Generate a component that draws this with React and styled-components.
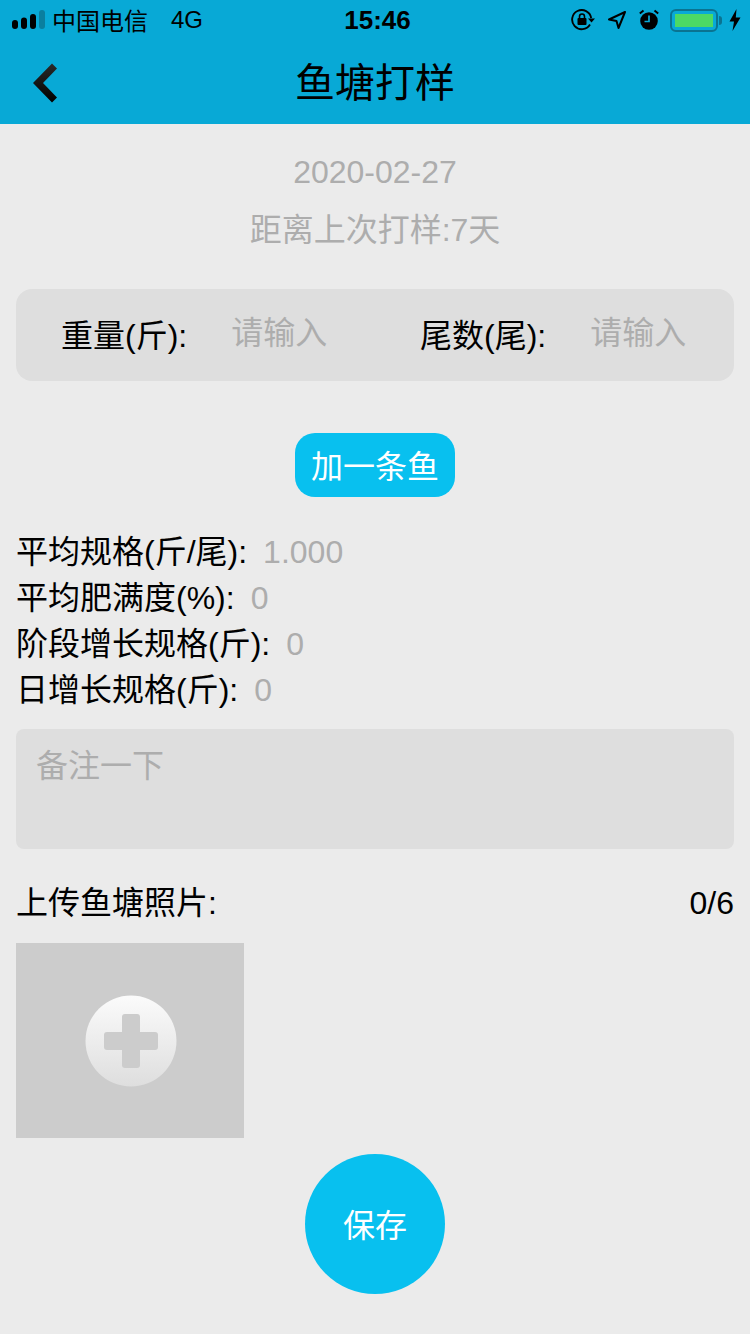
import styled, { createGlobalStyle } from 'styled-components';

const Global = createGlobalStyle`
  html, body {
    margin: 0;
    padding: 0;
    background: #ebebeb;
  }
  * { box-sizing: border-box; }
`

const FONT = `"Liberation Sans", "Noto Sans CJK SC", sans-serif`

const stats = [
  { label: '平均规格(斤/尾):', value: '1.000' },
  { label: '平均肥满度(%):', value: '0' },
  { label: '阶段增长规格(斤):', value: '0' },
  { label: '日增长规格(斤):', value: '0' },
]

function SignalBars() {
  return (
    <svg width="34" height="20" viewBox="0 0 34 20">
      <rect x="0" y="10" width="6" height="9" rx="3" fill="#000" />
      <rect x="9" y="7.5" width="6" height="11.5" rx="3" fill="#000" />
      <rect x="18" y="4" width="6" height="15" rx="3" fill="#000" />
      <rect x="27" y="0" width="6" height="19" rx="3" fill="#0a7f9f" />
    </svg>
  )
}

function LockIcon() {
  return (
    <svg width="24" height="22" viewBox="0 0 24 22" fill="none">
      <path d="M19 15.5A9.6 9.6 0 1 1 20.2 9" stroke="#000" strokeWidth="1.9" />
      <path d="M17 9.5h7l-3.5 4z" fill="#000" />
      <rect x="6.5" y="9" width="9" height="7" rx="1" fill="#000" />
      <path d="M8.5 9.5V7.5a2.5 2.5 0 0 1 5 0v2" stroke="#000" strokeWidth="1.6" />
    </svg>
  )
}

function LocationIcon() {
  return (
    <svg width="20" height="20" viewBox="0 0 20 20" fill="none">
      <path d="M18 2L2 9.5l7.5 1.5L11.5 18z" stroke="#000" strokeWidth="2" strokeLinejoin="round" />
    </svg>
  )
}

function AlarmIcon() {
  return (
    <svg width="20" height="22" viewBox="0 0 20 22" fill="none">
      <circle cx="10" cy="12" r="8.8" fill="#000" />
      <path d="M10 6.5V12.5H5.5" stroke="#08a9d6" strokeWidth="1.7" />
      <path d="M0.8 4.5L4.5 1.5M19.2 4.5L15.5 1.5" stroke="#000" strokeWidth="2" />
    </svg>
  )
}

function Bolt() {
  return (
    <svg width="12" height="22" viewBox="0 0 12 22">
      <path d="M7.5 0L0.5 12.5H5L3.5 22L11.5 8.5H6.8z" fill="#000" />
    </svg>
  )
}

function BackIcon() {
  return (
    <svg width="26" height="42" viewBox="0 0 26 42" fill="none">
      <defs>
        <linearGradient id="back" x1="0" y1="0" x2="0" y2="1">
          <stop offset="0" stopColor="#2a2a2a" />
          <stop offset="1" stopColor="#000" />
        </linearGradient>
      </defs>
      <path d="M2 21L21 1.5L26 6.5L12 21L26 35.5L21 40.5z" fill="url(#back)" />
    </svg>
  )
}

function PlusBadge() {
  return (
    <svg width="92" height="92" viewBox="0 0 92 92">
      <defs>
        <linearGradient id="badge" x1="0" y1="0" x2="0" y2="1">
          <stop offset="0" stopColor="#fbfbfb" />
          <stop offset="1" stopColor="#dedede" />
        </linearGradient>
      </defs>
      <circle cx="46" cy="46" r="45.5" fill="url(#badge)" />
      <path
        d="M40 19h12a3 3 0 0 1 3 3v15h15a3 3 0 0 1 3 3v12a3 3 0 0 1-3 3H55v15a3 3 0 0 1-3 3H40a3 3 0 0 1-3-3V55H22a3 3 0 0 1-3-3V40a3 3 0 0 1 3-3h15V22a3 3 0 0 1 3-3z"
        fill="#cccccc"
      />
    </svg>
  )
}

export default function App() {
  return (
    <Page>
      <Global />
      <Header>
        <StatusBar>
          <StatusSide>
            <SignalBars />
            <Carrier>中国电信</Carrier>
            <Network>4G</Network>
          </StatusSide>
          <Clock>15:46</Clock>
          <StatusRight>
            <LockIcon />
            <LocationIcon />
            <AlarmIcon />
            <Battery><BatteryFill /></Battery>
            <Bolt />
          </StatusRight>
        </StatusBar>
        <NavBar>
          <BackButton><BackIcon /></BackButton>
          <Title>鱼塘打样</Title>
        </NavBar>
      </Header>

      <Content>
        <DateBlock>
          <DateLine>2020-02-27</DateLine>
          <DateLine>距离上次打样:7天</DateLine>
        </DateBlock>

        <InputCard>
          <Field>
            <FieldLabel>重量(斤):</FieldLabel>
            <Placeholder>请输入</Placeholder>
          </Field>
          <Field>
            <FieldLabel>尾数(尾):</FieldLabel>
            <Placeholder>请输入</Placeholder>
          </Field>
        </InputCard>

        <AddRow>
          <AddButton>加一条鱼</AddButton>
        </AddRow>

        <Stats>
          {stats.map((s) => (
            <StatRow key={s.label}>
              <span>{s.label}</span>
              <StatValue>{s.value}</StatValue>
            </StatRow>
          ))}
        </Stats>

        <Note>备注一下</Note>

        <UploadHead>
          <span>上传鱼塘照片:</span>
          <span>0/6</span>
        </UploadHead>

        <UploadTile><PlusBadge /></UploadTile>

        <SaveRow>
          <SaveButton>保存</SaveButton>
        </SaveRow>
      </Content>
    </Page>
  )
}

const Page = styled.div`
  width: 750px;
  height: 1334px;
  overflow: hidden;
  background-color: #ebebeb;
  font-family: ${FONT};
  color: #000;
`
const Header = styled.div`
  height: 124px;
  background-color: #08a9d6;
`
const StatusBar = styled.div`
  height: 40px;
  padding: 0 9px 0 12px;
  display: grid;
  grid-template-columns: 1fr auto 1fr;
  align-items: center;
`
const StatusSide = styled.div`
  display: flex;
  align-items: center;
  font-size: 24px;
`
const Carrier = styled.span`
  margin-left: 6px;
  position: relative;
  top: -1px;
`
const Network = styled.span`
  margin-left: 23px;
`
const Clock = styled.div`
  font-size: 26px;
  font-weight: bold;
  margin-left: 2px;
`
const StatusRight = styled.div`
  display: flex;
  align-items: center;
  justify-content: flex-end;
  gap: 12px;
`
const Battery = styled.div`
  position: relative;
  width: 48px;
  height: 23px;
  margin-left: -1px;
  margin-right: -1px;
  padding: 3px;
  border: 2px solid #0a7391;
  border-radius: 6px;
  &::after {
    content: '';
    position: absolute;
    right: -6px;
    top: 5px;
    width: 3px;
    height: 9px;
    background: #0a7391;
    border-radius: 0 3px 3px 0;
  }
`
const BatteryFill = styled.div`
  width: 100%;
  height: 100%;
  background: #4cd964;
`
const NavBar = styled.div`
  position: relative;
  height: 84px;
  padding-bottom: 4px;
  display: flex;
  align-items: center;
  justify-content: center;
`
const BackButton = styled.div`
  position: absolute;
  left: 31px;
  top: 22px;
  display: flex;
`
const Title = styled.div`
  font-size: 40px;
`
const Content = styled.div`
  padding: 0 16px;
`
const DateBlock = styled.div`
  padding-top: 29px;
  display: flex;
  flex-direction: column;
  align-items: center;
  gap: 20px;
`
const DateLine = styled.div`
  font-size: 32px;
  line-height: 38px;
  color: #adadad;
`
const InputCard = styled.div`
  margin-top: 40px;
  height: 92px;
  border-radius: 16px;
  background-color: #dedede;
  display: grid;
  grid-template-columns: 359px 1fr;
`
const Field = styled.div`
  padding-left: 45px;
  padding-bottom: 5px;
  display: flex;
  align-items: center;
  gap: 44px;
`
const FieldLabel = styled.span`
  font-size: 32px;
`
const Placeholder = styled.span`
  font-size: 32px;
  color: #adadad;
  position: relative;
  top: -3px;
`
const AddRow = styled.div`
  margin-top: 52px;
  display: flex;
  justify-content: center;
`
const AddButton = styled.div`
  width: 160px;
  height: 64px;
  padding-bottom: 2px;
  border-radius: 20px;
  background-color: #08c0ef;
  color: #fff;
  font-size: 32px;
  display: flex;
  align-items: center;
  justify-content: center;
`
const Stats = styled.div`
  margin-top: 32px;
  display: flex;
  flex-direction: column;
`
const StatRow = styled.div`
  height: 46px;
  font-size: 32px;
  line-height: 46px;
  display: flex;
  gap: 16px;
`
const StatValue = styled.span`
  color: #adadad;
`
const Note = styled.div`
  margin-top: 16px;
  height: 120px;
  padding: 17px 20px;
  border-radius: 8px;
  background-color: #dedede;
  color: #adadad;
  font-size: 32px;
  line-height: 40px;
`
const UploadHead = styled.div`
  margin-top: 32px;
  height: 44px;
  font-size: 32px;
  line-height: 44px;
  display: flex;
  justify-content: space-between;
`
const UploadTile = styled.div`
  margin-top: 18px;
  width: 228px;
  height: 195px;
  padding-left: 2px;
  background-color: #cccccc;
  display: flex;
  align-items: center;
  justify-content: center;
`
const SaveRow = styled.div`
  margin-top: 16px;
  display: flex;
  justify-content: center;
`
const SaveButton = styled.div`
  width: 140px;
  height: 140px;
  padding-bottom: 2px;
  border-radius: 50%;
  background-color: #08c0ef;
  color: #fff;
  font-size: 32px;
  display: flex;
  align-items: center;
  justify-content: center;
`
